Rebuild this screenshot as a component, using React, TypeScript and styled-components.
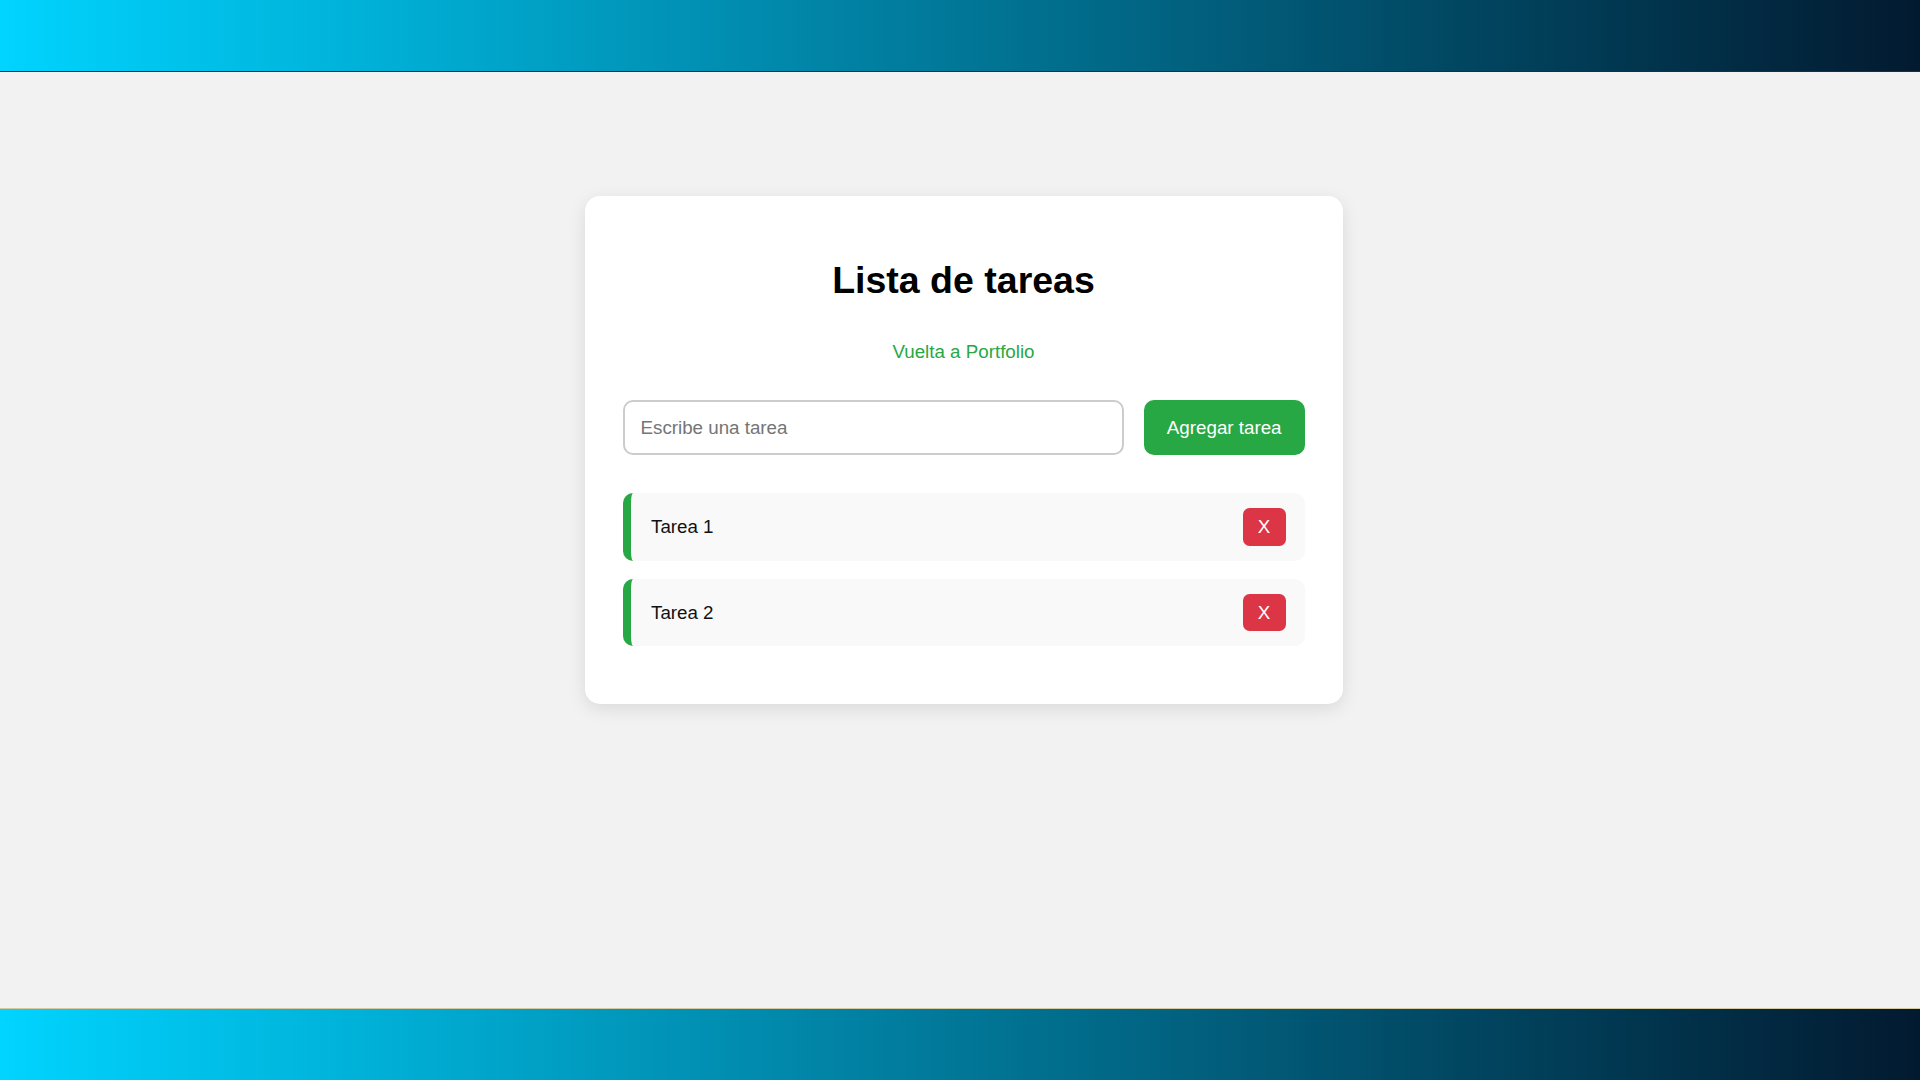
import React from "react";
import styled, { createGlobalStyle } from "styled-components";

const GlobalStyle = createGlobalStyle`
  html, body {
    margin: 0;
    padding: 0;
    background: #f2f2f2;
    font-family: "Liberation Sans", Arial, sans-serif;
  }
  * { box-sizing: border-box; }
`;

const Page = styled.div`
  min-height: 100vh;
  display: flex;
  flex-direction: column;
`;

const Bar = styled.div<{ $edge: "top" | "bottom" }>`
  height: 72px;
  background: linear-gradient(90deg, #00d4ff 0%, #021a30 100%);
  ${(p) =>
    p.$edge === "top"
      ? "border-bottom: 1.3px solid #2a2a2a;"
      : "border-top: 1px solid #d3c9a2;"}
`;

const Main = styled.main`
  flex: 1;
  display: flex;
  justify-content: center;
  align-items: flex-start;
  padding: 124px 0 0 7px;
`;

const Card = styled.section`
  width: 758px;
  background: #ffffff;
  border-radius: 15px;
  box-shadow: 0 5px 18px rgba(0, 0, 0, 0.1);
  padding: 63px 38px 58px 38px;
  display: flex;
  flex-direction: column;
  align-items: stretch;
`;

const Title = styled.h1`
  margin: 0;
  font-size: 37.5px;
  line-height: 42px;
  font-weight: 700;
  color: #000;
  text-align: center;
`;

const BackLink = styled.a`
  display: block;
  margin: 39.5px auto 0;
  font-size: 18.75px;
  line-height: 21px;
  color: #28a745;
  text-decoration: none;
  text-align: center;
`;

const Form = styled.form`
  margin-top: 38.5px;
  display: flex;
  gap: 20px;
  height: 55px;
`;

const TaskInput = styled.input`
  flex: 1;
  height: 55px;
  border: 2px solid #cccccc;
  border-radius: 10px;
  padding: 0 16px;
  font-family: "Liberation Sans", Arial, sans-serif;
  font-size: 18.75px;
  color: #222;
  outline: none;
  background: #fff;
  &::placeholder {
    color: #757575;
  }
`;

const AddButton = styled.button`
  height: 55px;
  padding: 0 23px;
  border: none;
  border-radius: 10px;
  background: #28a745;
  color: #ffffff;
  font-family: "Liberation Sans", Arial, sans-serif;
  font-size: 18.75px;
  cursor: pointer;
`;

const List = styled.ul`
  list-style: none;
  margin: 38px 0 0;
  padding: 0;
  display: flex;
  flex-direction: column;
  gap: 18px;
`;

const TaskItem = styled.li`
  display: flex;
  align-items: center;
  justify-content: space-between;
  background: #f9f9f9;
  border-left: 8.75px solid #28a745;
  border-radius: 10px;
  padding: 15px 19px 15px 20.5px;
`;

const TaskText = styled.span`
  font-size: 18.75px;
  line-height: 21.5px;
  color: #111;
`;

const DeleteButton = styled.button`
  height: 37.5px;
  width: 43px;
  padding: 0;
  border: none;
  border-radius: 6.5px;
  background: #dc3545;
  color: #ffffff;
  font-family: "Liberation Sans", Arial, sans-serif;
  font-size: 18.75px;
  line-height: 21.5px;
  cursor: pointer;
`;

const tasks = ["Tarea 1", "Tarea 2"];

export default function App() {
  return (
    <>
      <GlobalStyle />
      <Page>
        <Bar $edge="top" />
        <Main>
          <Card>
            <Title>Lista de tareas</Title>
            <BackLink href="#">Vuelta a Portfolio</BackLink>
            <Form onSubmit={(e) => e.preventDefault()}>
              <TaskInput placeholder="Escribe una tarea" />
              <AddButton type="submit">Agregar tarea</AddButton>
            </Form>
            <List>
              {tasks.map((t) => (
                <TaskItem key={t}>
                  <TaskText>{t}</TaskText>
                  <DeleteButton type="button">X</DeleteButton>
                </TaskItem>
              ))}
            </List>
          </Card>
        </Main>
        <Bar $edge="bottom" />
      </Page>
    </>
  );
}
